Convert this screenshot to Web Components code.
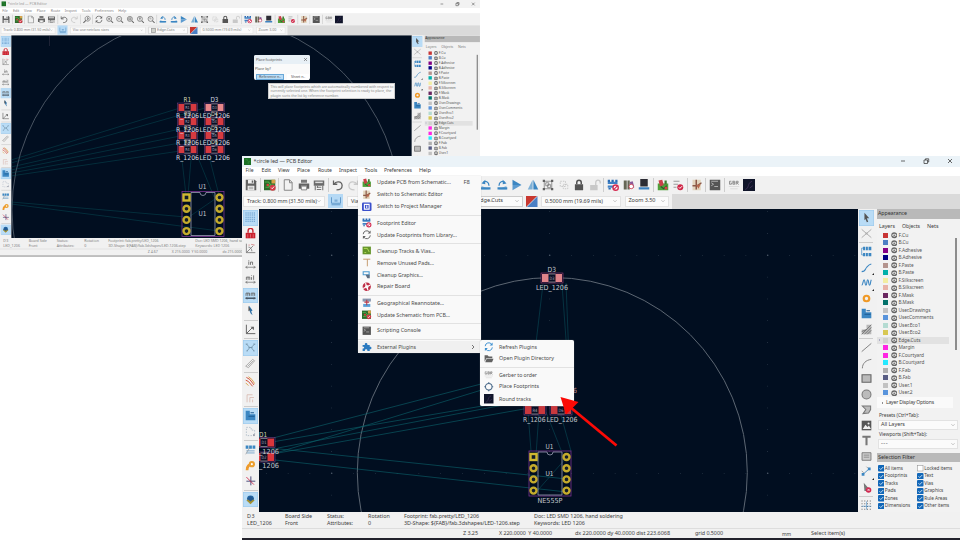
<!DOCTYPE html>
<html lang="en">
<head>
<meta charset="utf-8">
<title>PCB Editor</title>
<style>
html,body{margin:0;background:#fff}
body{position:relative;width:960px;height:540px;overflow:hidden;font-family:"Noto Sans","Open Sans",sans-serif;font-size:5.9px;line-height:1;color:#333}
#back{position:absolute;left:0;top:0;transform:scale(.6685);transform-origin:0 0}
#front{position:absolute;left:242px;top:156px}
#tools{position:absolute;left:358px;top:176px;width:123px}
#plugins{position:absolute;left:480px;top:340px;width:94px}
#dialog{position:absolute;left:254px;top:55px}
#tip{position:absolute;left:268px;top:83px}
#arrow{position:absolute;left:550px;top:390px}
svg{display:block}
</style>
</head>
<body>
<kc-window id="back" zoom="Zoom 3.00" dim z="Z 4.67" xy="X 215.0000  Y 50.0000" d="dx 215.0000"><kc-board view="11.4 35.4 400.4 202.6" kind="cluster"></kc-board></kc-window>
<kc-dialog id="dialog"></kc-dialog>
<kc-tip id="tip"></kc-tip>
<kc-window id="front" zoom="Zoom 3.50" z="Z 3.25" xy="X 220.0000  Y 40.0000" d="dx 220.0000 dy 40.0000 dist 223.6068"><kc-board view="259 209 599 303" kind="circle"></kc-board></kc-window>
<kc-menu id="tools">
<kc-item icon="update" w="74" key="F8">Update PCB from Schematic...</kc-item>
<kc-item icon="sch" w="66">Switch to Schematic Editor</kc-item>
<kc-item icon="proj" w="65">Switch to Project Manager</kc-item>
<kc-rule></kc-rule>
<kc-item icon="fped" w="39">Footprint Editor</kc-item>
<kc-item icon="refresh" w="80">Update Footprints from Library...</kc-item>
<kc-rule></kc-rule>
<kc-item icon="clean" w="58">Cleanup Tracks &amp; Vias...</kc-item>
<kc-item icon="pads" w="57">Remove Unused Pads...</kc-item>
<kc-item icon="cleang" w="46">Cleanup Graphics...</kc-item>
<kc-item icon="repair" w="33">Repair Board</kc-item>
<kc-rule></kc-rule>
<kc-item icon="geo" w="67">Geographical Reannotate...</kc-item>
<kc-item icon="board" w="73">Update Schematic from PCB...</kc-item>
<kc-rule></kc-rule>
<kc-item icon="console" w="44">Scripting Console</kc-item>
<kc-rule></kc-rule>
<kc-item icon="puzzle" w="39" hot>External Plugins</kc-item>
</kc-menu>
<kc-menu id="plugins" sub>
<kc-item icon="refreshb" w="38">Refresh Plugins</kc-item>
<kc-item icon="folder" w="55">Open Plugin Directory</kc-item>
<kc-rule></kc-rule>
<kc-item icon="gbr" w="38">Gerber to order</kc-item>
<kc-item icon="ring" w="40">Place Footprints</kc-item>
<kc-item icon="dark" w="32">Round tracks</kc-item>
</kc-menu>
<svg id="arrow" width="75" height="60"><path d="M66.500 55.500L20 17" stroke="#fb0a06" stroke-width="2.800"/><path d="M10.500 7l18 5L16 24.500z" fill="#fb0a06"/></svg>

<script>
const G='#626262',B='#3b86c2',R='#c9202c',N='#4fa03a';
const mag=i=>`<g fill="none" stroke="${G}" stroke-width="1.3"><circle cx="7" cy="7" r="5"/><path d="M10.700 10.700L15 15" stroke-width="2"/></g>${i}`;
const ln=(d,c=G,w=1.3)=>`<path d="${d}" fill="none" stroke="${c}" stroke-width="${w}"/>`;
const fl=(d,c=G)=>`<path d="${d}" fill="${c}"/>`;
const cyc=c=>ln('M2 7a6 6 0 0 1 11-3M14 9a6 6 0 0 1-11 3',c,1.6)+fl('M14.500 1v5h-5zM1.500 15v-5h5z',c);
const dots=(c,s=3)=>{let d='';for(let y=1.5;y<16;y+=s)for(let x=1.5;x<16;x+=s)d+=`M${x-.7} ${y-.7}h1.400v1.400h-1.400z`;return fl(d,c)};
/* ruler icons: unit strokes above a double-headed arrow */
const rul=(d)=>ln(d,G,1.2)+ln('M1 12h14M3.500 10.500L1 12l2.500 1.500M12.500 10.500L15 12l-2.500 1.500','#777',1.1);
const no=(x=11.5,y=11.500)=>`<circle cx="${x}" cy="${y}" r="3.500" fill="#fff" stroke="#d42a50" stroke-width="1.800"/>`+ln(`M${x-2.300} ${y+2.300}l4.600-4.600`,'#d42a50',1.6);
const ICONS={
save:fl('M1 1h12l2 2v12H1z')+fl('M4 1h8v5H4zM3.500 9h9v6h-9z','#f0f0f0')+fl('M9 2h2v3H9z')+ln('M5 11h6M5 13h6','#777',.8),
board:fl('M0 1h15v14H0z','#2c6a2c')+ln('M1 4h5l3 4h5M2 11h4l3-3','#4fae48',1.6)+fl('M10 1h5v5h-5z','#d9a24a')+`<circle cx="5" cy="8" r="1.800" fill="#d8423a"/><circle cx="11.500" cy="11.500" r="4" fill="#d23a48"/>`+ln('M9.500 11.500l1.500 1.500 2.500-3','#fff',1.2),
page:ln('M3 1h7l3.500 3.500V15H3zM10 1v4h3.500','#858585'),
print:fl('M1 6h14v7H1z')+fl('M4 1h8v4H4z','#777')+fl('M4 9h8v6H4z','#f5f5f5')+ln('M4.500 9.500h7v5h-7z','#666',1),
plot:fl('M1 2h14v7H1z','#6a6a6a')+fl('M3 3.500h10v2H3z','#ddd')+ln('M3 9v6M13 9v6M5 11h6M5 14h6M6 9v3','#777',1.500),
undo:ln('M2 2v5h5M2.500 7C5 2.500 13 2.500 13.500 8.500 13.500 13 10 14.500 6 14.500',G,1.700),
redo:ln('M14 2v5H9M13.500 7C11 2.500 3 2.500 2.500 8.500 2.500 13 6 14.500 10 14.500','#c9c9c9',1.7),
find:ln('M1 15l5-5',G,2)+ln('M9.500 1.500a5 5 0 1 1-.1 0zM9 4v5l3-2.500z'),
refresh:cyc(G),refreshb:cyc('#3d8fd0'),
zin:mag(ln('M7 4.500v5M4.500 7h5')),zout:mag(ln('M4.500 7h5')),zfit:mag(ln('M5 5h4v4H5z')),zobj:mag(ln('M7 4v6M5 5.500h4')),zsel:mag(ln('M4.500 5h3M5 7h4','#888')),
rccw:fl('M2 9l11 5H2z','#9cc3e2')+fl('M1 11h13v3H1z',B)+ln('M4 5c3-4 8-1 8 4',B,1.700)+fl('M2 6l5-5v6z',B),
rcw:fl('M14 9L3 14h11z','#9cc3e2')+fl('M2 11h13v3H2z',B)+ln('M4 9c0-5 5-8 8-4',B,1.7)+fl('M14 6L9 1v6z',B),
mir:fl('M2 1l12 7H2z',B)+fl('M2 8h12L2 15z','#5c9bd0'),flip:fl('M7.500 1v13H1z','#7db0d6')+fl('M8.500 1v13H15z',B),
group:ln('M3 3h10v10H3zM5 5h4v4H5zM7.500 7.500h4v4h-4z','#777',1)+fl('M1 1h3v3H1zM12 1h3v3h-3zM1 12h3v3H1zM12 12h3v3h-3z'),
ungroup:`<path d="M3 3h7v7H3zM7 7h6v6H7z" fill="none" stroke="#b9b9b9" stroke-dasharray="2 1.500"/>`,
lock:fl('M2.500 7h11v8h-11z','#555')+ln('M5 7V4.500a3 3 0 0 1 6 0V7','#555',2),
unlock:fl('M1.500 8h10v7h-10z','#c8c8c8')+ln('M9 8V4.500a3 3 0 0 1 6 0V6','#c8c8c8',1.700),
fped:ln('M1 5h13M1 10h9','#3f80c4',3)+fl('M1 1h3v3H1zM6 1h3v3H6zM11 1h3v3h-3zM2 12h3v2H2z','#2b6cb5')+no(),
lib:fl('M1 2h4v12H1zM6 2h3v12H6z','#665')+fl('M9 4l4-1 2 8-4 2z','#8a5a9a')+`<circle cx="11" cy="10" r="3" fill="#fff" stroke="#c34"/>`,
mon:fl('M3 0h10v10H3z','#2c2c34')+fl('M1 11h14v3H1z','#3e82c0'),
update:fl('M1 6h14v9H1z',N)+fl('M2 2l5-1 2 7-5 2z','#c9404a')+fl('M10 2h3v5h-3z','#3d7a30')+ln('M5 10l4 3 4-4','#2a562a',1.500)+`<circle cx="12" cy="12" r="2" fill="#d8434a"/>`,
drc:ln('M2 3h8M2 7h6M2 11h4','#999')+`<circle cx="11" cy="11" r="4" fill="#cf2848"/>`+ln('M9 11l1.500 1.500 3-3','#fff',1.3),
sch:fl('M2 1h11v14H2z','#e2d5bd')+ln('M7 1v13M2 9h6l6-4','#8b5a48',2)+fl('M7 8l6-1-3 6z','#b8684c'),
console:fl('M1 1h14v14H1z','#555')+ln('M3 5l3 2-3 2M7 10h5M3 3h9','#c0c0c0',1.1),
gbr:ln('M4.500 3H2v4h2.500V5.200H3.500M6.500 2.500v4.500H9V5H6.500M6.500 3H9v2M11 7.500V3h2.500v2H11M12 5l2 2.500','#777',1)+ln('M1 10h14M3 13h10','#d5d5d5',1),
dark:fl('M0 0h16v16H0z','#10152a')+ln('M3 14c6-2 2-8 9-11M9 12l4-3','#4a3660',1),
proj:`<rect y="1" width="16" height="14" rx="2" fill="#3b50cc"/>`+ln('M4 4h8v8H4zM8 6v4','#fff',1.800),
clean:fl('M1 1h14v13H1z','#64942a')+ln('M3 4h6l3 6M4 11h3','#b5dd5a',1.600),
pads:ln('M2 2h12M9 2v12','#c49a6c',1.600),
cleang:ln('M2 3h10v5H2z','#4c9bd0',1.8)+fl('M6 8h7v6H9z','#5d6d80'),
repair:`<circle cx="8" cy="8" r="5" fill="none" stroke="#bf3048" stroke-width="4"/>`+ln('M2 11l4-2M10 7l4-2M6 2l1 4M9 10l1 4','#fff',2),
geo:fl('M1 1h14v5H1z','#8898b0')+fl('M2 10h12v5H2z','#5aa0d8')+ln('M8 3v9M4 7h8','#b83848',1.800),
puzzle:fl('M1 5h4c-2-4 5-5 4 0h4v3c4-1 4 5 0 4v3H9c1-4-5-4-4 0H1v-4c4 0 3-4 0-3z','#2a7ac0'),
folder:fl('M1 2h5l2 2h6v3H4l-3 6z')+fl('M4.500 8H16l-2.500 6H2z'),
ring:`<circle cx="8" cy="8" r="5.500" fill="none" stroke="#4a6a8a" stroke-width="1.700"/>`+ln('M8 .5v2M8 13.500v2M.5 8h2M13.500 8h2','#4a6a8a',2),
grid:dots('#4a86bd'),rlock:fl('M1 7h14v8H1z',R)+ln('M4.500 7V4a3.500 3.500 0 0 1 7 0v3',R,2)+ln('M4 9v5M8 9v5M12 9v5','#e8808a',1),
polar:ln('M2 1v13h13M2 14L12 4M5 6c3 0 5 3 5 6','#777',1.200)+ln('M9 2l5 1M5 3h2','#c66',1),
inch:rul('M5.500 3.500v5M8 8.500v-4h3v4M5.500 1.500v1'),mil:rul('M2 8.500v-4h5v4M4.500 4.500v4M9.500 4.500v4M12.500 2v6.500M9.500 2v1'),mm:rul('M1.500 8.500v-4h5v4M4 4.500v4M9 8.500v-4h5v4M11.500 4.500v4')+ln('M1 12h14','#456',2),
cur:fl('M6 1l5 7-2 1 2 6-3-3-2-5z','#2e71a8')+fl('M5 1l3 6-3 2z','#555'),
ang:ln('M2 1v13h13M2 14L11 5',G,1.4)+fl('M8 4h5v5z'),
rats:ln('M2 3l5 5-4 5M14 3L9 8l4 5M5 8h6M1 3h3M12 3h3M2 13h2M12 13h2','#6a8aa0',1.100),
curve:ln('M1 12L11 2l3 2L5 14zM4 12l8-8','#999',1.100),
tr:ln('M2 2l5 3 6 8M1 6l4 2 6 7','#d2503a',1.4)+ln('M5 1l5 4 4 6M1 10l4 4','#dca040',1.300),
fade:ln('M3 15V4h8M7 15V8h6M11 15v-4','#d8b8b0',1.200),
zone:fl('M1 1h6v5h8v9H1z',B)+ln('M5 9h9M8 4h5','#1c5a90',1.500),
outl:`<path d="M2 2h7v4h5v8H2z" fill="none" stroke="#9ab" stroke-dasharray="2 2"/>`+fl('M12 12h2v2h-2z','#778'),
padn:fl('M1 2h4v5H1zM6 2h4v5H6zM11 2h4v5h-4z',B)+ln('M2 10h12M2 13h12','#7aa8cc',1.4)+ln('M1 15L7 5','#888',.8),
via:ln('M3 15c0-6 3-9 8-9','#ee9a2c',4)+`<circle cx="10" cy="6" r="4.500" fill="#eca030"/><circle cx="10" cy="6" r="1.500" fill="#fff"/>`,
plus:ln('M2 9h13M8.500 2v13',"#4a4a7a",1.400)+ln('M2 3l11 11','#c24',1.2),
lay:`<circle cx="8" cy="7" r="5" fill="#2368a4"/>`+fl('M2 9l6 6 6-6-6-3z','#a29030')+fl('M3 7l5 4 5-4-5-4z','#235a94'),
arrow:fl('M5 1l7 8H8.500l2 5-2 1-2-5L5 12z','#555'),
cross:ln('M1 2l14 12M15 2L1 14','#9a9a9a',1.100)+`<circle cx="8" cy="8" r="1.500" fill="#aaa"/>`,
ic:fl('M3 1h3v5H3zM7 1h3v5H7zM11 1h4v5h-4zM3 10h3v5H3zM7 10h3v5H7zM11 10h4v5h-4z',B)+ln('M5 3H1v10h3',B,1),
trace:ln('M1 14c6 0 5-4 7-6s3-4 7-5',B,1.500),tune:ln('M1 12c2 0 2-8 3.500-8s1 8 2.700 8 1-8 2.600-8 1 8 2.700 8S13.500 6 15 4',B,1.6),
vi:`<circle cx="8" cy="8" r="4" fill="none" stroke="#f09a28" stroke-width="3.200"/>`,
hatch:fl('M1 8h7V1h7v14H1z','#b8b8b8')+ln('M1 15L15 1M1 11l7-3M5 15L15 5M9 15l6-6','#666',1.100),
line:ln('M1 14L15 2','#777',1.300),arc:ln('M2 15C2 8 7 3 15 2','#777',1.300),
rect:`<path d="M1.500 2.500h13v11h-13z" fill="#bbb" stroke="#666" stroke-width="1.600"/>`,
circ:`<circle cx="8" cy="8" r="6.500" fill="#bbb" stroke="#777" stroke-width="1.500"/>`,
poly:`<path d="M2 3h12v5l-3 5-8 1 4-6z" fill="#bbb" stroke="#777" stroke-width="1.500"/>`,
img:fl('M1 1h14v14H1z','#555')+fl('M2.500 13l4-6 3 3 2-2 3 5z','#eee')+`<circle cx="11" cy="5" r="1.500" fill="#eee"/>`,
T:fl('M2 1h12v3H9.500v11h-3V4H2z','#777'),
tb:`<path d="M1.500 2.500h13v11h-13z" fill="#ccc" stroke="#777" stroke-width="1.300"/>`+ln('M4 6h8M4 9h8','#777',1),
dim:ln('M3 12L12 4',B,1.300)+fl('M1 10h4v4H1zM10 2h4v4h-4z',B)+ln('M1 7l3 3M8 1l2 2','#999'),
del:fl('M4 1l7 8H8l1 4-4 0z','#777')+`<circle cx="11" cy="11.500" r="4" fill="#d12850"/>`+ln('M9.500 10l3 3M12.500 10l-3 3','#fff',1),
org:dots('#666',4)+ln('M1 9h14M8 2v12',B,.8),
width:ln('M2 3v8h12V3M2 13h12','#5a94c6',1.200)+fl('M6 6h4v3H6z','#7eaed6'),
pair:fl('M0 0h16L0 16z','#c8372f')+fl('M16 0v16H0z','#4a7fc4')+ln('M16 0L0 16','#ddd',1),
app:fl('M0 0h16v16H0z','#1c7026')+ln('M3 3h4v4M9 13v-5h4','#3a8e40',1.6),
};
const ctx=document.createElement('canvas').getContext('2d');
function def(name,html,setup){
  const t=document.createElement('template');
  customElements.define(name,class extends HTMLElement{
    connectedCallback(){
      if(this.shadowRoot)return;
      t.innerHTML=typeof html==='function'?html(this):html;
      this.attachShadow({mode:'open'}).append(t.content.cloneNode(true));
      if(setup)setup(this);
    }
  });
}
/* kc-text: one line of text fitted to the width w, by a smaller size first, then by letter spacing */
def('kc-text','<style>:host{display:inline-block;white-space:pre;line-height:1}</style><slot></slot>',e=>{
  const w=+e.getAttribute('w'),s=e.textContent;
  if(!w)return;
  const c=getComputedStyle(e);
  ctx.font=`${c.fontWeight} 100px ${c.fontFamily}`;
  let fs=parseFloat(c.fontSize);const m=ctx.measureText(s).width/100;
  if(m*fs>w*1.02){fs=Math.max(fs*.86,w*1.02/m);e.style.fontSize=fs.toFixed(2)+'px'}
  e.style.letterSpacing=((w-m*fs)/s.length).toFixed(3)+'px';
});
def('kc-icon',e=>`<style>:host{display:block;width:12px;height:12px;flex:none}svg{display:block;width:100%;height:100%}</style><svg viewBox="0 0 16 16">${ICONS[e.getAttribute('name')]||''}</svg>`);
def('kc-rule','<style>:host{display:block;height:4px;box-sizing:border-box;background:linear-gradient(#e2e2e2,#e2e2e2) 0 1.500px/100% 1px no-repeat}</style>');
def('kc-item',e=>`<style>:host{display:flex;align-items:center;height:12px;padding:0 6px 0 4px;color:#4c4c4c;box-sizing:border-box}:host([hot]){background:#f0f0f0}
kc-icon{width:9.500px;height:9.500px;margin-right:5.500px}.k{margin-left:auto;padding-right:5px}svg{width:4px;height:6px;margin-left:auto}</style><kc-icon name="${e.getAttribute('icon')}"></kc-icon><kc-text w="${e.getAttribute('w')}">${e.innerHTML}</kc-text>${e.hasAttribute('key')?`<kc-text class="k">${e.getAttribute('key')}</kc-text>`:''}${e.hasAttribute('hot')?'<svg viewBox="0 0 4 6"><path d="M1 1l2 2-2 2" fill="none" stroke="#555" stroke-width=".8"/></svg>':''}`);
def('kc-menu','<style>:host{display:flex;flex-direction:column;background:#f9f9f9;border-radius:0 0 2px 2px;box-shadow:0 0 1px #999;padding-top:1.200px}:host([sub]){border-radius:2px;padding:1.200px 0 1px;box-sizing:border-box}</style><slot></slot>');
def('kc-bar',e=>{
  const v=e.hasAttribute('vertical');
  const it=e.getAttribute('items').split(' ').map(n=>{
    if(n==='|')return '<i></i>';
    const on=n.endsWith('*'),m=n.endsWith('+');
    return `<b class="${on?'on':''}${m?'more':''}"><kc-icon name="${n.replace(/[*+]/,'')}"></kc-icon></b>`}).join('');
  return `<style>:host{display:flex;background:#f1f1f1;flex:none;box-sizing:border-box;${v?'flex-direction:column;align-items:center':'align-items:center;height:18px;padding-left:1.300px'}}
  b{display:flex;flex:none;align-items:center;justify-content:center;width:15.500px;height:15.500px;position:relative}
  ${v?'kc-icon{width:11px;height:11px}':''}
  .on{background:#b9dcf6;box-shadow:inset 0 0 0 .5px #98c6ea}
  .more::after{content:"";position:absolute;right:0;bottom:0;border:1.700px solid #222;border-left-color:transparent;border-top-color:transparent}
  i{flex:none;${v?'height:3px;width:14px;background:linear-gradient(#ccc,#ccc) 0 1px/100% 1px no-repeat':'width:3px;height:14px;background:linear-gradient(#cdcdcd,#cdcdcd) 1px 0/1px 100% no-repeat'}}</style>${it}`});
def('kc-select',e=>`<style>:host{display:flex;align-items:center;justify-content:space-between;background:#fbfbfb;border:.5px solid #e2e2e2;box-sizing:border-box;padding:0 3px;height:11px;flex:none}svg{width:4px;height:4px}</style><slot></slot><svg viewBox="0 0 10 10"><path d="M1 3l4 4 4-4" fill="none" stroke="#999" stroke-width="1.400"/></svg>`);
def('kc-layer',e=>`<style>:host{display:flex;align-items:center;height:7.500px;padding-left:6px;width:72px;box-sizing:border-box;font-size:5.200px;color:#555;position:relative}:host([on]){background:#e2e2e2}
:host([on])::before{content:"";position:absolute;left:2px;border:1.500px solid transparent;border-left-color:#77a;top:2px}
i{width:5px;height:5px;background:${e.getAttribute('color')};margin-right:2.500px}svg{width:6.500px;height:6.500px;margin-right:1.500px}</style><i></i><svg viewBox="0 0 12 12"><circle cx="6" cy="6" r="5.500" fill="#666"/><path d="M1.500 6c3-3.500 6-3.500 9 0-3 3.500-6 3.500-9 0z" fill="#e2e2e2"/><circle cx="6" cy="6" r="1.600" fill="#777"/></svg><kc-text w="${e.getAttribute('w')}">${e.textContent}</kc-text>`);
def('kc-check',e=>`<style>:host{display:flex;align-items:center;height:7.500px;font-size:5.300px;color:#444}svg{width:6.500px;height:6.500px;margin-right:.500px}</style><svg viewBox="0 0 13 13">${e.hasAttribute('off')?'<rect x="1" y="1" width="11" height="11" fill="#fff" stroke="#888"/>':'<rect width="13" height="13" rx="2" fill="#1267b8"/><path d="M3 6.500l2.500 2.500 5-5" fill="none" stroke="#fff" stroke-width="1.500"/>'}</svg><kc-text w="${e.getAttribute('w')}">${e.textContent}</kc-text>`);
const LAYERS=[['F.Cu','#c83434',10],['B.Cu','#4d7fc4',10],['F.Adhesive','#840084',23.5],['B.Adhesive','#000084',23.5],['F.Paste','#b4948e',15],['B.Paste','#00b0aa',15.5],['F.Silkscreen','#f2eda1',25],['B.Silkscreen','#e8b2a7',25],['F.Mask','#6a2660',15.5],['B.Mask','#02716a',15.5],['User.Drawings','#c2c2c2',32],['User.Comments','#5994dc',35],['User.Eco1','#b4dbd2',22],['User.Eco2','#d8c852',22],['Edge.Cuts','#d0d2cd',22],['Margin','#ff26e2',16],['F.Courtyard','#ff26e2',25.500],['B.Courtyard','#26e9ff',26],['F.Fab','#afafaf',12],['B.Fab','#585d84',12],['User.1','#c2c2c2',14],['User.2','#5994dc',14]];
def('kc-panel',e=>`<style>:host{display:block;width:83px;margin-left:2.500px;background:#f2f2f2;flex:none;overflow:hidden;position:relative}
h4{margin:0;font-weight:400;font-size:6.200px;height:9.500px;background:#b9b9b9;display:flex;align-items:center;padding-left:1px;color:#333}
.tabs{display:flex;height:13px;align-items:center;gap:7px;padding-left:2px;padding-top:3px;box-sizing:border-box}
.bar{position:absolute;right:3.500px;top:29px;width:1.500px;height:112px;background:#8d8d8d}
.ldo{height:11px;display:flex;align-items:center;padding:1px 0 0 5px;box-sizing:border-box;background:#fafafa;width:76px;gap:2px}.ldo i{border:1.700px solid transparent;border-left-color:#222;width:0}
.l{font-size:5.400px;height:9px;display:flex;align-items:center;padding:0 0 0 2px}
kc-select{width:80px;margin:0 1px;height:10px;padding:0 2px}
.c{display:grid;grid-template-columns:39.500px auto;padding:2.500px 0 0 .800px}</style>
<h4><kc-text w="29">Appearance</kc-text></h4>
<div class="tabs"><kc-text w="16">Layers</kc-text><kc-text w="18">Objects</kc-text><kc-text w="11.500">Nets</kc-text></div><div class="bar"></div>
${LAYERS.slice(0,e.hasAttribute('short')?21:22).map(l=>`<kc-layer ${l[0]==='Edge.Cuts'?'on':''} color="${l[1]}" w="${l[2]}">${l[0]}</kc-layer>`).join('')}
${e.hasAttribute('short')?'':`<div class="ldo"><i></i><kc-text w="48">Layer Display Options</kc-text></div>
<div class="l" style="margin-top:3px"><kc-text w="40">Presets (Ctrl+Tab):</kc-text></div><kc-select><kc-text w="24">All Layers</kc-text></kc-select>
<div class="l"><kc-text w="48">Viewports (Shift+Tab):</kc-text></div><kc-select><kc-text w="7">---</kc-text></kc-select>
<h4 style="margin-top:4px"><kc-text w="37">Selection Filter</kc-text></h4>
<div class="c">${[['All items',18],['Locked items',28,'off'],['Footprints',22.5],['Text',9],['Tracks',13],['Vias',9],['Pads',11],['Graphics',19],['Zones',13],['Rule Areas',23],['Dimensions',25.5],['Other items',25]].map(c=>`<kc-check ${c[2]||''} w="${c[1]}">${c[0]}</kc-check>`).join('')}</div>`}`);
def('kc-window',e=>{
 const a=n=>e.getAttribute(n),dim=e.hasAttribute('dim');
 return `<style>:host{display:flex;flex-direction:column;width:718px;height:384px;background:#f1f1f1;overflow:hidden;box-sizing:border-box;border-bottom:2px solid #22222c;color:#404040}
:host([dim]){color:#808080;border-bottom-color:#a8a8a8}
.t{display:flex;align-items:center;height:10.500px;background:#ebf3f8;padding-left:1.500px;flex:none;gap:2.500px}:host([dim]) .t{background:#f2f2f2;color:#999;height:12px}
.t kc-icon{width:7.500px;height:7.500px}.t svg{width:62px;height:10px;margin:0 3.500px 0 auto}
.m{display:flex;background:#fff;height:9px;align-items:center;padding-left:3.500px;flex:none}:host([dim]) .m{height:7.500px;padding-top:2px;box-sizing:border-box}
.s{display:flex;height:15.500px;align-items:center;background:#dadada;flex:none}.s div{display:flex;align-items:center;height:100%;background:#f1f1f1;width:430px;gap:4px;box-sizing:border-box;padding-left:1px}
.s span{width:15px;height:14px;background:#b5d9f5;display:flex;align-items:center;justify-content:center}
.w{display:flex;height:303px;flex:none}.w ::slotted(*){width:599px;height:303px;flex:none}
kc-bar[vertical].left{width:17px;padding-top:1.200px}kc-bar[vertical].right{width:16.500px;padding-top:1.200px;overflow:hidden}
.i{display:grid;grid-template-columns:38px 42px 41px 36px 130px auto;padding:.500px 0 0 5px;height:16px;box-sizing:border-box;align-content:start;font-size:5.400px;row-gap:0;flex:none}.i kc-text{line-height:7.500px;justify-self:start}
.b{display:grid;grid-template-columns:36px 76px 120px 87px 29px auto;padding-left:221px;height:10px;align-items:center;border-top:.5px solid #ddd;font-size:5.500px;flex:none}.b kc-text{justify-self:start}
.sw{display:flex;gap:2px;align-items:center}.sw i{width:5px;height:5px;border:.5px solid #999;background:#d0d2cd}</style>
<div class="t"><kc-icon name="app"></kc-icon><kc-text w="59">*circle led — PCB Editor</kc-text><svg viewBox="0 0 62 10"><path d="M6 5h4M53 3l4 4M57 3l-4 4M29 4h3.500v3.500H29zM30.500 4V2.800h3.200V6h-1" fill="none" stroke="#444" stroke-width=".800"/></svg></div>
<div class="m">${[['File',8,8],['Edit',9.5,7],['View',11.5,7.5],['Place',13,8],['Route',14,7],['Inspect',18,7.5],['Tools',13,6.5],['Preferences',28,7],['Help',12,0]].map(x=>`<kc-text w="${x[1]}" style="margin-right:${x[2]}px">${x[0]}</kc-text>`).join('')}</div>
<kc-bar items="save | board | page print plot | undo redo | find | refresh zin zout zfit zobj zsel | rccw rcw mir flip group ungroup lock unlock | fped lib mon | update drc | sch | console | gbr dark"></kc-bar>
<div class="s"><div><kc-select style="width:82px"><kc-text w="70">Track: 0.800 mm (31.50 mils)</kc-text></kc-select><span style="margin-left:-1px"><kc-icon name="width"></kc-icon></span>
<kc-select style="width:113px">${dim?'<kc-text w="54">Via: use netclass sizes</kc-text>':'<kc-text w="9">Via:</kc-text>'}</kc-select><kc-select style="width:59px;border-color:#ccc"><span class="sw" style="background:none;width:auto"><i></i><kc-text w="26">Edge.Cuts</kc-text></span></kc-select><kc-icon name="pair" style="margin-left:-1px;width:11.500px;height:11.500px"></kc-icon>
<kc-select style="width:80px;margin-left:-.5px"><kc-text w="58">0.5000 mm (19.69 mils)</kc-text></kc-select><kc-select style="width:44px;margin-left:-.5px"><kc-text w="27">${a('zoom')}</kc-text></kc-select></div></div>
<div class="w"><kc-bar class="left" vertical items="grid* rlock polar inch mil mm* cur | ang | rats* curve | tr fade | zone* outl | padn via plus | lay*"></kc-bar><slot></slot>
<kc-bar class="right" vertical items="arrow* cross | ic trace+ tune+ vi zone hatch | line arc rect circ poly img T tb dim+ del | org+"></kc-bar><kc-panel ${dim?'short':''}></kc-panel></div>
<div class="i"><kc-text w="8">D3</kc-text><kc-text w="27">Board Side</kc-text><kc-text w="17">Status:</kc-text><kc-text w="22">Rotation</kc-text><kc-text w="75">Footprint: fab.pretty/LED_1206</kc-text><kc-text w="89">Doc: LED SMD 1206, hand soldering</kc-text>
<kc-text w="25">LED_1206</kc-text><kc-text w="13">Front</kc-text><kc-text w="26">Attributes:</kc-text><kc-text>0</kc-text><kc-text w="116">3D-Shape: \${FAB}/fab.3dshapes/LED-1206.step</kc-text><kc-text w="51">Keywords: LED 1206</kc-text></div>
<div class="b"><kc-text w="15">${a('z')}</kc-text><kc-text w="53">${a('xy')}</kc-text><kc-text w="${dim?30:95}">${a('d')}</kc-text>${dim?'':'<kc-text w="28">grid 0.5000</kc-text><kc-text w="9">mm</kc-text><kc-text w="34">Select item(s)</kc-text>'}</div>`});

/* Board drawings, in page coordinates */
const tx=(x,y,w,s,z=7,c='#c3c6cd')=>`<text x="${x}" y="${y}" font-size="${z}" textLength="${w}" lengthAdjust="spacingAndGlyphs" fill="${c}">${s}</text>`;
const smd=(cx,cy,c,t,m='#8a4a9a')=>`<rect x="${cx-11}" y="${cy-5}" width="22" height="10" fill="#0a0f25" stroke="${m}" stroke-width=".5"/><path d="M${cx-10} ${cy-4}h6.500v8h-6.500zM${cx+3.500} ${cy-4}h6.500v8h-6.500z" fill="${c}"/><path d="M${cx-3.500} ${cy-4}h7M${cx-3.500} ${cy+4}h7" stroke="#bbb" stroke-width=".6"/>${tx(cx-2.500,cy+1.800,5,t,4.500,'#aab')}`;
const dip=(x,y,h)=>`<rect x="${x}" y="${y}" width="42" height="${h}" fill="none" stroke="#7a3490" stroke-width=".800"/><path d="M${x+18} ${y+1}H${x+9}V${y+h-1}H${x+33}V${y+1}H${x+24}a3 3 0 0 1-6 0z" fill="none" stroke="#9a9db4" stroke-width=".800"/>${[0,1,2,3].map(i=>`<circle cx="${x+37.500}" cy="${y+6+i*11.200}" r="3" fill="#111b28" stroke="#c4ab2c" stroke-width="2.400"/>`+(i?`<circle cx="${x+4.500}" cy="${y+6+i*11.200}" r="3" fill="#111b28" stroke="#c4ab2c" stroke-width="2.400"/>`:`<rect x="${x+1.500}" y="${y+3}" width="6" height="6" fill="#111b28" stroke="#d0b830" stroke-width="2.400"/>`)).join('')}${tx(x+16.500,y-2,8,'U1')}${tx(x+16.500,y+25,8,'U1')}`;
const wires=(d,o)=>`<path d="${d}" fill="none" stroke="#0c666e" stroke-width=".700" opacity="${o}"/>`;
const BOARDS={
circle:()=>{let g='';for(let i=0;i<28;i++){const x=266.300+21.800*i;for(const y of [255.300,473.300])g+=`<circle cx="${x}" cy="${y}" r="${i%10===3?.8:.4}"/>`}
 for(const x of [331.700,549.700,767.700])for(let y=211.700;y<512;y+=21.800)g+=`<circle cx="${x}" cy="${y}" r=".4"/>`;
 return `<g fill="#4d5a68">${g}</g><circle cx="552.300" cy="472.500" r="195" fill="none" stroke="#5c6672" stroke-width="1"/>`
 +wires('M275 437.500L535 370M276 453L560 366M275 441.500L535 397M278 448L535 399M278 453L535 407M270 448L567 479M275 460L567 492',.85)
 +wires('M543 284L534 360M562 284L570 395M566 283L571 410M528 412L531 451M539 412L536 455M546 412L561 450M560 412L571 451M538 490L567 457',.6)
 +smd(552,278,'#e0848a','D3','#b48')+tx(547.500,271.500,8.500,'D3')+tx(536,289.500,32,'LED_1206')
 +smd(535,410,'#c8383e','R4')+smd(561,410,'#c8383e','D6')+tx(573,393,4,'6',7,'#b88')+tx(523,421.500,22.500,'R_1206')+tx(546.500,421.500,31,'LED_1206')
 +smd(264,442.500,'#d8363c','D1')+smd(264,457,'#d8363c','D2')+tx(259,437,8,'D1',7,'#d4d3b0')+tx(259,453.500,20,'_1206')+tx(259,467.500,20,'_1206')
 +dip(529,451,45)+tx(537.500,502.500,25,'NE555P')},
cluster:()=>`<circle cx="206" cy="210" r="194" fill="none" stroke="#5c6672" stroke-width=".800"/><path d="M49.500 36v10" stroke="#334" stroke-width=".600"/>`
 +wires('M11 160L180 108M11 163L205 108M11 167L180 129M11 170L180 136M11 173L180 143M11 176L180 151M11 202L186 217M11 204L219 231M182 160L186 195M191 160L188 195M199 160L214 197M210 160L219 195M186 219L218 197',.5)
 +[107.500,121.500,135.500,149.500].map((y,i)=>{const s=(x,c,t)=>`<g transform="translate(${x} ${y}) scale(.9)">${smd(0,0,c,t+(t==='R'?i+1:i+3))}</g>`;return s(187.500,'#d63a40','R')+s(214.500,i?'#d63a40':'#e8868a','D')}).join('')
 +[1,2,3].map(i=>tx(184,102+i*14,7,'R'+(i+1),6,'#d4d3b0')+tx(211,102+i*14,7,'D'+(i+3),6,'#d4d3b0')).join('')
 +[117.500,131.500,145.500,160].map(y=>tx(176,y,23,'R_1206',6.500,'#d8dae0')+tx(199.500,y,30.500,'LED_1206',6.500,'#d8dae0')).join('')
 +tx(183.500,102,7.500,'R1',7,'#d4d3b0')+tx(210.500,102,8,'D3',7,'#d8dae0')+dip(182,191.500,45)
};
def('kc-board',e=>`<style>:host{display:block;background:#010e20;overflow:hidden}svg{display:block;width:100%;height:100%;font-family:"DejaVu Sans","Open Sans",sans-serif}</style><svg viewBox="${e.getAttribute('view')}">${BOARDS[e.getAttribute('kind')]()}</svg>`);
def('kc-dialog',`<style>:host{display:flex;flex-direction:column;width:56px;height:25px;background:#fafafa;border-radius:2px;overflow:hidden;font-size:4.200px;color:#555;box-sizing:border-box}
.t{display:flex;justify-content:space-between;align-items:center;height:9px;background:#e8f0f6;padding:0 3px 0 2px}.p{padding:2.500px 1px 0}.b{display:flex;gap:3px;margin:auto 1px 0 2px;height:6px}.b span{flex:1;display:flex;align-items:center;justify-content:center;background:#fff}.b .f{background:#b9dcf6;flex:1.200;border:.5px solid #6aa8d8;box-sizing:border-box}svg{width:3px;height:3px}</style>
<div class="t"><kc-text w="26">Place footprints</kc-text><svg viewBox="0 0 6 6"><path d="M0 0l6 6M6 0L0 6" stroke="#444"/></svg></div><div class="p"><kc-text w="16">Place by?</kc-text></div><div class="b"><span class="f"><kc-text w="22">Reference n..</kc-text></span><span><kc-text w="14">Sheet n..</kc-text></span></div>`);
def('kc-tip',`<style>:host{display:flex;flex-direction:column;justify-content:center;gap:.800px;width:127px;height:16px;background:#f7f7f7;border:.5px solid #ccc;box-sizing:border-box;padding-left:1.500px;font-size:4px;color:#888}</style>
<kc-text w="123">This will place footprints which are automatically numbered with respect to</kc-text><kc-text w="121">currently selected one. When the footprint selection is ready to place, the</kc-text><kc-text w="68">plugin sorts the list by reference number.</kc-text>`);
</script>
</body>
</html>
